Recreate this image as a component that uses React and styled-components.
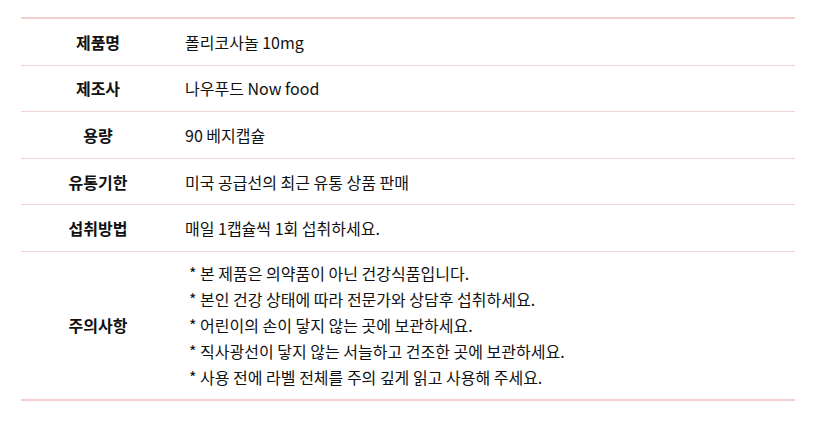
import styled, { createGlobalStyle } from "styled-components";

const GlobalStyle = createGlobalStyle`
  body {
    margin: 0;
    background: #fff;
    font-family: "Noto Sans CJK KR", "Noto Sans", sans-serif;
    color: #111;
  }
`;

const Wrap = styled.div`
  padding: 17px 21px 0 21px;
`;

const Table = styled.table`
  width: 774px;
  border-collapse: collapse;
  border-top: 2px solid #f4cfcf;
  border-bottom: 2px solid #f4cfcf;
  font-size: 16px;
`;

const Row = styled.tr`
  border-bottom: 1px solid #f4d3d3;
  &:last-child {
    border-bottom: none;
  }
`;

const Label = styled.th`
  width: 154px;
  font-weight: 700;
  text-align: center;
  padding: 0;
  height: ${(p) => (p.$tall ? "147px" : "45.6px")};
  vertical-align: middle;
`;

const Value = styled.td`
  padding: ${(p) => (p.$tall ? "8px 10px 9px" : "0 10px")};
  font-weight: 400;
  vertical-align: middle;
`;

const Note = styled.p`
  margin: 0;
  line-height: 26px;
  padding-left: 4px;
`;

const rows = [
  ["제품명", "폴리코사놀 10mg"],
  ["제조사", "나우푸드 Now food"],
  ["용량", "90 베지캡슐"],
  ["유통기한", "미국 공급선의 최근 유통 상품 판매"],
  ["섭취방법", "매일 1캡슐씩 1회 섭취하세요."],
];

const notes = [
  "본 제품은 의약품이 아닌 건강식품입니다.",
  "본인 건강 상태에 따라 전문가와 상담후 섭취하세요.",
  "어린이의 손이 닿지 않는 곳에 보관하세요.",
  "직사광선이 닿지 않는 서늘하고 건조한 곳에 보관하세요.",
  "사용 전에 라벨 전체를 주의 깊게 읽고 사용해 주세요.",
];

function App() {
  return (
    <Wrap>
      <GlobalStyle />
      <Table>
        <tbody>
          {rows.map(([k, v]) => (
            <Row key={k}>
              <Label>{k}</Label>
              <Value>{v}</Value>
            </Row>
          ))}
          <Row>
            <Label $tall>주의사항</Label>
            <Value $tall>
              {notes.map((n) => (
                <Note key={n}>* {n}</Note>
              ))}
            </Value>
          </Row>
        </tbody>
      </Table>
    </Wrap>
  );
}

export default App;
